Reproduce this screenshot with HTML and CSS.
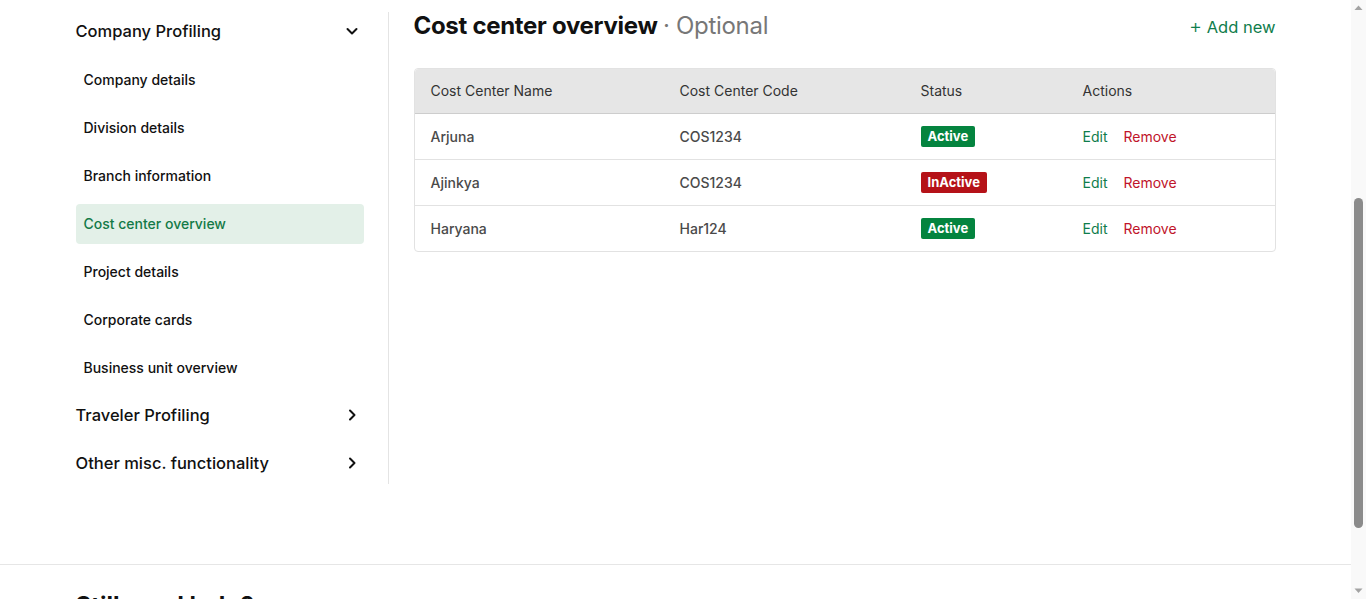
FILE: index.html
```html
<!DOCTYPE html>
<html lang="en">
<head>
<meta charset="utf-8">
<title>Cost center overview</title>
<link rel="stylesheet" href="styles.css">
</head>
<body>
<div class="page">
  <main class="wrap layout">
    <aside class="sidebar">
      <div class="group-head">
        <span>Company Profiling</span>
        <svg class="chev" width="14" height="14" viewBox="0 0 14 14"><path d="M2.5 5l4.5 4.5L11.5 5" fill="none" stroke="#111" stroke-width="2" stroke-linecap="round" stroke-linejoin="round"/></svg>
      </div>
      <a class="nav-item">Company details</a>
      <a class="nav-item">Division details</a>
      <a class="nav-item">Branch information</a>
      <a class="nav-item active">Cost center overview</a>
      <a class="nav-item">Project details</a>
      <a class="nav-item">Corporate cards</a>
      <a class="nav-item">Business unit overview</a>
      <div class="group-head">
        <span>Traveler Profiling</span>
        <svg class="chev" width="14" height="14" viewBox="0 0 14 14"><path d="M5 2.5l4.5 4.5L5 11.5" fill="none" stroke="#111" stroke-width="2" stroke-linecap="round" stroke-linejoin="round"/></svg>
      </div>
      <div class="group-head">
        <span>Other misc. functionality</span>
        <svg class="chev" width="14" height="14" viewBox="0 0 14 14"><path d="M5 2.5l4.5 4.5L5 11.5" fill="none" stroke="#111" stroke-width="2" stroke-linecap="round" stroke-linejoin="round"/></svg>
      </div>
    </aside>

    <section class="content">
      <div class="content-head">
        <h2 class="title">Cost center overview <span class="optional">· Optional</span></h2>
        <a class="add-new"><span class="plus">+</span> Add new</a>
      </div>
      <table class="cc-table">
        <thead>
          <tr>
            <th class="c1">Cost Center Name</th>
            <th class="c2">Cost Center Code</th>
            <th class="c3">Status</th>
            <th class="c4">Actions</th>
          </tr>
        </thead>
        <tbody>
          <tr>
            <td>Arjuna</td>
            <td>COS1234</td>
            <td><span class="badge ok">Active</span></td>
            <td><a class="act edit">Edit</a><a class="act remove">Remove</a></td>
          </tr>
          <tr>
            <td>Ajinkya</td>
            <td>COS1234</td>
            <td><span class="badge bad">InActive</span></td>
            <td><a class="act edit">Edit</a><a class="act remove">Remove</a></td>
          </tr>
          <tr>
            <td>Haryana</td>
            <td>Har124</td>
            <td><span class="badge ok">Active</span></td>
            <td><a class="act edit">Edit</a><a class="act remove">Remove</a></td>
          </tr>
        </tbody>
      </table>
    </section>
  </main>

  <footer class="help">
    <div class="wrap help-inner">
      <div class="help-left">
        <h3 class="help-title">Still need help?</h3>
      </div>
      <a class="faq">FAQs <span class="faq-arrow">›</span></a>
    </div>
  </footer>
</div>
<div class="scrollbar">
  <div class="sb-btn">
    <svg width="15" height="15" viewBox="0 0 15 15"><path d="M3.5 10h8L7.5 5.5z" fill="#a3a3a3"/></svg>
  </div>
  <div class="sb-track">
    <div class="sb-thumb" style="margin-top:183px;height:330px"></div>
  </div>
  <div class="sb-btn">
    <svg width="15" height="15" viewBox="0 0 15 15"><path d="M3.5 4.5h8L7.5 9z" fill="#a3a3a3"/></svg>
  </div>
</div>
</body>
</html>
```

FILE: styles.css
```css
* { box-sizing: border-box; }
html, body { margin: 0; padding: 0; height: 100%; }
body {
  font-family: Inter, "Noto Sans", "Liberation Sans", sans-serif;
  color: #111;
  background: #fff;
  overflow: hidden;
  display: flex;
}
a { text-decoration: none; cursor: pointer; }

.page {
  flex: 1;
  height: 100vh;
  overflow: hidden;
  padding-top: 12px;
}

.scrollbar {
  width: 15px;
  flex: none;
  height: 100vh;
  background: #f9f9f9;
  display: flex;
  flex-direction: column;
}
.sb-btn { height: 15px; flex: none; display: flex; }
.sb-track { flex: 1; display: flex; flex-direction: column; align-items: center; }
.sb-thumb { width: 9px; background: #8b8b8b; border-radius: 5px; }

.wrap { max-width: 1200px; margin: 0 auto; }

.layout { display: flex; align-items: flex-start; }

.sidebar {
  width: 313px;
  flex: none;
  padding-right: 24px;
  border-right: 1px solid #e4e4e4;
  display: flex;
  flex-direction: column;
  gap: 8px;
}
.group-head {
  height: 40px;
  margin-top: -1px;
  margin-bottom: 1px;
  display: flex;
  align-items: center;
  justify-content: space-between;
  font-size: 16.5px;
  font-weight: 500;
  color: #111;
  padding-right: 5px;
}
.nav-item {
  height: 40px;
  display: flex;
  align-items: center;
  padding-left: 8px;
  padding-bottom: 2px;
  font-size: 14px;
  font-weight: 500;
  color: #111;
  border-radius: 4px;
}
.nav-item.active { background: #e3f0e8; color: #137a47; }

.content { flex: 1; padding-left: 25px; }
.content-head { display: flex; align-items: center; justify-content: space-between; height: 28px; }
.title { margin: 0; font-size: 24px; font-weight: 700; letter-spacing: -0.3px; line-height: 28px; }
.optional { font-weight: 400; color: #777; }
.add-new { font-size: 16.5px; color: #0f7d4c; }
.plus { font-size: 20px; font-weight: 300; }

.cc-table {
  margin-top: 28px;
  width: 100%;
  border-collapse: separate;
  border-spacing: 0;
  border: 1px solid #e2e2e2;
  border-radius: 4px;
  font-size: 14px;
}
.cc-table th {
  background: #e6e6e6;
  height: 45px;
  text-align: left;
  font-weight: 400;
  color: #333;
  padding: 0 16px 2px;
  border-bottom: 1px solid #cdcdcd;
}
.cc-table th.c1 { width: 249px; border-top-left-radius: 4px; }
.cc-table th.c2 { width: 241px; }
.cc-table th.c3 { width: 162px; }
.cc-table th.c4 { border-top-right-radius: 4px; }
.cc-table td {
  height: 46px;
  padding: 0 16px;
  font-weight: 500;
  color: #4a4a4a;
  border-bottom: 1px solid #e2e2e2;
}
.cc-table tbody tr:last-child td { border-bottom: none; height: 45px; }

.badge {
  display: inline-block;
  height: 21px;
  line-height: 21px;
  padding: 0 7px;
  border-radius: 2px;
  font-size: 13px;
  font-weight: 700;
  color: #fff;
}
.badge.ok { background: #04843f; }
.badge.bad { background: #b51218; }
.act { font-weight: 400; font-size: 14px; }
.act.edit { color: #0f7d4c; margin-right: 16px; }
.act.remove { color: #c0142a; }

.help { margin-top: 80px; border-top: 1px solid #e6e6e6; padding: 26px 0 40px; }
.help-inner { display: flex; align-items: baseline; }
.help-left { width: 600px; }
.help-title { margin: 0; font-size: 24px; font-weight: 700; line-height: 30px; }
.faq { font-size: 13px; color: #0f7d4c; }
.faq-arrow { font-size: 16px; margin-left: 6px; }
```
